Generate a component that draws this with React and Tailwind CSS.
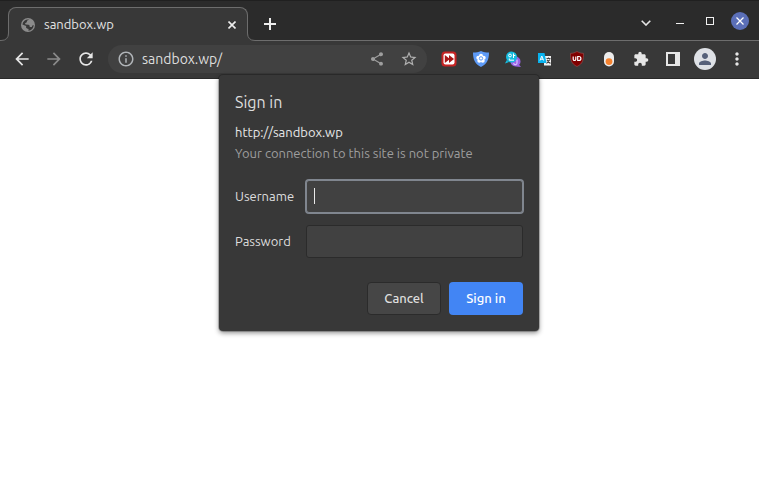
import React from 'react';
import {
  MdArrowBack,
  MdArrowForward,
  MdRefresh,
  MdInfoOutline,
  MdShare,
  MdStarOutline,
  MdExtension,
  MdMoreVert,
  MdPerson,
} from 'react-icons/md';

function ToolButton({ label, children }) {
  return (
    <button type="button" aria-label={label} className="flex h-8 w-8 shrink-0 items-center justify-center text-[#e6e6e6]">
      {children}
    </button>
  );
}

function GlobeIcon() {
  return (
    <svg viewBox="0 0 14 14" className="h-3.5 w-3.5 shrink-0">
      <circle cx="7" cy="7" r="7" fill="#8b8b8b" />
      <path d="M8.200 1.600 6 2.800 5.800 4.200 4 5.200 4.600 6.600 7.600 6.800 8.800 7.800 8.600 9h2.200l.6-1.400 1.300-.6A5.700 5.700 0 0 1 7.400 12.700L7.600 11 6 10.600 5 9.400 5.200 8 1.400 6.500A5.700 5.700 0 0 1 8.200 1.600z" fill="#383838" />
    </svg>
  );
}

function SkipIcon() {
  return (
    <svg viewBox="0 0 16 16" className="h-4 w-4">
      <rect x="0.500" y="0.500" width="15" height="15" rx="3.500" fill="#c52222" />
      <rect x="2.500" y="2.500" width="11" height="11" rx="2" fill="#fff" />
      <path d="M3.800 4 8 7.200V4L13 8 8 12V8.800L3.800 12z" fill="#a81616" />
    </svg>
  );
}

function ShieldGearIcon() {
  return (
    <svg viewBox="0 0 16 16" className="h-4 w-4">
      <path d="M8 0c2.400 1.200 5 1.600 8 1.600 0 7-2 11.800-8 14.400C2 13.400 0 8.600 0 1.600 3 1.600 5.600 1.200 8 0z" fill="#5e9bf7" />
      <g fill="#fff">
        <circle cx="8" cy="4.800" r="2" />
        <circle cx="5.300" cy="6.700" r="2" />
        <circle cx="10.700" cy="6.700" r="2" />
        <circle cx="6.300" cy="9.700" r="2" />
        <circle cx="9.700" cy="9.700" r="2" />
        <circle cx="8" cy="7.400" r="2.500" />
      </g>
      <circle cx="8" cy="7.400" r="1.700" fill="none" stroke="#5e9bf7" strokeWidth="1" />
    </svg>
  );
}

function LanguageIcon() {
  return (
    <svg viewBox="0 0 16 16" className="h-4 w-4">
      <circle cx="10.500" cy="10.500" r="5" fill="#9a63e6" />
      <path d="M13.500 13 16 16 11 15.400z" fill="#9a63e6" />
      <path d="M12 8.600v3a1.700 1.700 0 0 1-3.400.6" fill="none" stroke="#d9c4ff" strokeWidth="1.200" />
      <circle cx="6.500" cy="6" r="5.500" fill="#16bde0" />
      <path d="M1.800 9 0 12.500l3.600-1.200z" fill="#16bde0" />
      <circle cx="5" cy="4.500" r="1.400" fill="none" stroke="#fff" strokeWidth="1" />
      <path d="M8.500 2.500v4.500M8.500 4.500h1.800M4.300 7.500v1.700h4.700" fill="none" stroke="#fff" strokeWidth="1" />
    </svg>
  );
}

function TranslateIcon() {
  return (
    <svg viewBox="0 0 16 16" className="h-4 w-4">
      <rect x="7" y="5" width="7" height="9.500" fill="#f1f1f1" />
      <path d="M9.500 7.500h4M11.500 6.500v1M13 8.500 9.500 12.500M10 9l3.400 3.500" fill="none" stroke="#444" strokeWidth="1.100" />
      <path d="M1 2h6.500l2 10H1z" fill="#08b2ee" />
      <path d="M3 9.500 4.800 5l1.800 4.500M3.600 8.200h2.400" fill="none" stroke="#fff" strokeWidth="1" />
    </svg>
  );
}

function BlockerIcon() {
  return (
    <svg viewBox="0 0 16 16" className="h-4 w-4">
      <path d="M8 .5c2.200 1.300 4.200 1.800 6.500 1.900 0 6.600-.6 10.200-6.500 13.100C2.100 12.600 1.500 9 1.500 2.400 3.800 2.300 5.800 1.800 8 .5z" fill="#800000" stroke="#a05050" strokeWidth=".6" />
      <path d="M4.200 5.500v2.700a1.300 1.300 0 0 0 2.600 0V5.500M8.700 5.500h1.200a2 2 0 0 1 0 4H8.700z" fill="none" stroke="#fff" strokeWidth="1.200" />
    </svg>
  );
}

function ToggleIcon() {
  return (
    <svg viewBox="0 0 16 16" className="h-4 w-4">
      <rect x="3" y="1" width="10" height="14.500" rx="5" fill="#ececec" />
      <circle cx="8" cy="10.600" r="3.400" fill="#f5822f" />
    </svg>
  );
}

function TabStrip() {
  return (
    <div className="flex h-[41px] items-end border-t border-[#202020] bg-[#2b2b2b]">
      <svg viewBox="0 0 9 8" className="relative z-10 -mr-px h-2 w-[9px] shrink-0">
        <path d="M9 0H8.500Q8.500 7.500 1 7.500H0V8H9z" fill="#383838" />
        <path d="M8.500 0Q8.500 7.500 1 7.500H0" fill="none" stroke="#6d6d6d" />
      </svg>
      <div className="flex h-[34px] w-60 items-center rounded-t-lg border border-b-0 border-[#6d6d6d] bg-[#383838] pr-[7px] pl-3">
        <GlobeIcon />
        <span className="ml-[9px] flex-1 text-[13px] text-[#e4e4e4]">sandbox.wp</span>
        <button type="button" aria-label="Close tab" className="flex h-4 w-4 items-center justify-center">
          <svg viewBox="0 0 8 8" className="h-2 w-2">
            <path d="M.5.500 7.500 7.500M7.500.500.500 7.500" stroke="#ededed" strokeWidth="1.600" />
          </svg>
        </button>
      </div>
      <svg viewBox="0 0 9 8" className="relative z-10 -ml-px h-2 w-[9px] shrink-0">
        <path d="M0 0H.5Q.5 7.500 8 7.500H9V8H0z" fill="#383838" />
        <path d="M.5 0Q.5 7.500 8 7.500H9" fill="none" stroke="#6d6d6d" />
      </svg>
      <div className="flex h-10 flex-1 items-center border-b border-[#6d6d6d] pr-2.5">
        <button type="button" aria-label="New tab" className="mt-1.5 flex h-7 w-7 items-center justify-center">
          <svg viewBox="0 0 12 12" className="h-3 w-3">
            <path d="M6 0V12M0 6H12" stroke="#ededed" strokeWidth="2" />
          </svg>
        </button>
        <div className="mt-px ml-auto flex items-center">
          <button type="button" aria-label="Search tabs" className="flex h-8 w-9 items-center justify-center pt-1">
            <svg viewBox="0 0 10 6" className="h-1.5 w-2.5">
              <path d="M.7.700 5 5 9.300.700" fill="none" stroke="#e6e6e6" strokeWidth="1.600" />
            </svg>
          </button>
          <button type="button" aria-label="Minimize" className="flex h-8 w-8 items-center justify-center pt-1">
            <span className="h-px w-2 bg-[#f0f0f0]" />
          </button>
          <button type="button" aria-label="Maximize" className="flex h-8 w-7 items-center justify-center">
            <span className="h-2 w-2 border border-[#f0f0f0]" />
          </button>
          <button type="button" aria-label="Close window" className="ml-[7px] flex h-[18px] w-[18px] items-center justify-center rounded-full bg-[#5b6fb8]">
            <svg viewBox="0 0 8 8" className="h-2 w-2">
              <path d="M.5.500 7.500 7.500M7.500.500.500 7.500" stroke="#fff" strokeWidth="1.300" />
            </svg>
          </button>
        </div>
      </div>
    </div>
  );
}

function Toolbar() {
  return (
    <div className="flex h-[38px] items-center border-b border-[#292929] bg-[#383838] px-1.5 pb-px">
      <ToolButton label="Back"><MdArrowBack className="h-5 w-5" /></ToolButton>
      <ToolButton label="Forward"><MdArrowForward className="h-5 w-5 text-[#8a8a8a]" /></ToolButton>
      <ToolButton label="Reload"><MdRefresh className="h-5 w-5" /></ToolButton>
      <div className="mx-1.5 flex h-7 min-w-0 flex-1 items-center rounded-full bg-[#414141] pr-0.5 pl-[9px]">
        <MdInfoOutline className="h-[18px] w-[18px] shrink-0 text-[#b0b4b8]" />
        <input
          aria-label="Address"
          defaultValue="sandbox.wp/"
          className="ml-[7px] min-w-0 flex-1 bg-transparent text-sm text-[#dedede] outline-none"
        />
        <ToolButton label="Share"><MdShare className="h-4 w-4 text-[#9e9e9e]" /></ToolButton>
        <ToolButton label="Bookmark"><MdStarOutline className="h-[18px] w-[18px] text-[#b0b0b0]" /></ToolButton>
      </div>
      <ToolButton label="Skip"><SkipIcon /></ToolButton>
      <ToolButton label="Privacy shield"><ShieldGearIcon /></ToolButton>
      <ToolButton label="Language"><LanguageIcon /></ToolButton>
      <ToolButton label="Translate"><TranslateIcon /></ToolButton>
      <ToolButton label="Blocker"><BlockerIcon /></ToolButton>
      <ToolButton label="Toggle"><ToggleIcon /></ToolButton>
      <ToolButton label="Extensions"><MdExtension className="h-4 w-4" /></ToolButton>
      <ToolButton label="Side panel">
        <svg viewBox="0 0 14 14" className="h-3.5 w-3.5">
          <path d="M0 0H14V14H0zM2 2V12H9V2z" fill="#e6e6e6" fillRule="evenodd" />
        </svg>
      </ToolButton>
      <ToolButton label="Profile">
        <span className="flex h-[22px] w-[22px] items-center justify-center rounded-full bg-[#dee1e6]">
          <MdPerson className="h-[18px] w-[18px] text-[#56617a]" />
        </span>
      </ToolButton>
      <ToolButton label="Menu"><MdMoreVert className="h-5 w-5" /></ToolButton>
    </div>
  );
}

function SignInDialog() {
  return (
    <form
      role="dialog"
      aria-label="Sign in"
      onSubmit={(e) => e.preventDefault()}
      className="w-80 rounded bg-[#383838] p-4 text-[13px] text-[#dedede] shadow-[0_0_0_1px_rgba(0,0,0,0.2),0_2px_5px_rgba(0,0,0,0.45)]"
    >
      <h1 className="text-base leading-[22px]">Sign in</h1>
      <p className="mt-[9px] leading-[21px] text-[#e8e8e8]">http://sandbox.wp</p>
      <p className="leading-[21px] text-[#9e9e9e]">Your connection to this site is not private</p>
      <div className="mt-4 grid grid-cols-[71px_1fr] items-center gap-y-3">
        <label htmlFor="username">Username</label>
        <div className="relative">
          <input
            id="username"
            className="block h-[33px] w-full rounded-[3px] border border-[#80868f] bg-[#414141] px-2 caret-transparent ring-1 ring-[#80868f] outline-none"
          />
          <span className="absolute top-2 left-2 h-4 w-px bg-[#e8e8e8]" />
        </div>
        <label htmlFor="password">Password</label>
        <input
          id="password"
          type="password"
          className="block h-[33px] w-full rounded-[3px] border border-[#2b2b2b] bg-[#414141] px-2 outline-none"
        />
      </div>
      <div className="mt-6 flex justify-end gap-2 font-medium">
        <button type="button" className="h-[33px] w-[74px] rounded border border-[#2b2b2b] bg-[#464646]">Cancel</button>
        <button type="submit" className="h-[33px] w-[74px] rounded bg-[#4285f4] text-white">Sign in</button>
      </div>
    </form>
  );
}

export default function App() {
  return (
    <div className="relative min-h-screen bg-white font-['Ubuntu','Noto_Sans',sans-serif]">
      <header>
        <TabStrip />
        <Toolbar />
      </header>
      <main className="absolute inset-x-0 top-[75px] flex justify-center pr-px">
        <SignInDialog />
      </main>
    </div>
  );
}
